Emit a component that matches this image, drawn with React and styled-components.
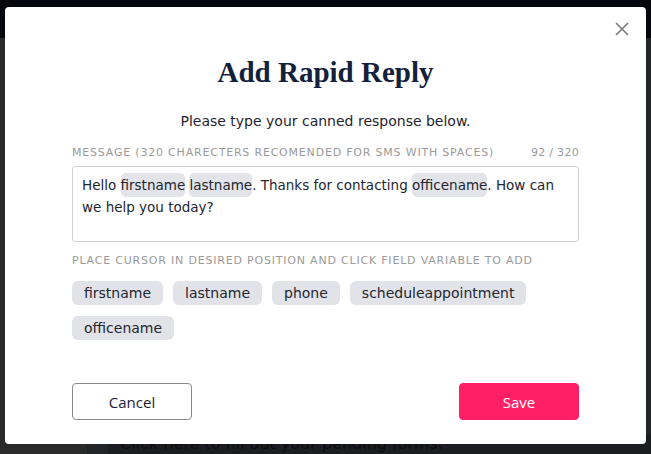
import React from 'react';
import styled, { createGlobalStyle } from 'styled-components';

const GlobalStyle = createGlobalStyle`
  html, body {
    margin: 0;
    padding: 0;
    height: 100%;
    background: #262626;
  }
  #root {
    height: 100%;
  }
`;

const Page = styled.div`
  display: flex;
  flex-direction: column;
  height: 454px;
  overflow: hidden;
  font-family: "DejaVu Sans", sans-serif;
`;

const TopBar = styled.div`
  height: 38px;
  background: #04070e;
`;

const Body = styled.div`
  flex: 1;
  display: grid;
  grid-template-columns: 87px 1fr;
  background: #272727;
`;

const Side = styled.div`
  background: #2a2a2a;
`;

const Main = styled.div`
  display: flex;
  flex-direction: column;
  justify-content: flex-end;
  background: #232427;
`;

const Banner = styled.div`
  margin-left: 21px;
  height: 20px;
  padding-left: 12px;
  background: #1c1d20;
  color: #0c0c0e;
  font-size: 16px;
  line-height: 20px;
  white-space: nowrap;
`;

const Overlay = styled.div`
  position: fixed;
  inset: 0;
  display: flex;
  justify-content: center;
  padding-top: 7px;
`;

const Modal = styled.div`
  position: relative;
  width: 641px;
  height: 437px;
  box-sizing: border-box;
  background: #ffffff;
  border-radius: 4px;
  padding: 46px 67px 0;
  display: flex;
  flex-direction: column;
  font-family: "DejaVu Sans", sans-serif;
  color: #222631;
`;

const Close = styled.button`
  position: absolute;
  top: 15px;
  right: 17px;
  width: 14px;
  height: 14px;
  padding: 0;
  border: none;
  background: none;
  cursor: pointer;
  display: flex;
`;

const Title = styled.h2`
  margin: 0;
  text-align: center;
  font-family: "Liberation Serif", "DejaVu Serif", serif;
  font-weight: 700;
  font-size: 29px;
  line-height: 38px;
  color: #14213d;
`;

const Subtitle = styled.p`
  margin: 21px 0 0;
  text-align: center;
  font-size: 14px;
  line-height: 19px;
  color: #1f2330;
`;

const LabelRow = styled.div`
  display: flex;
  justify-content: space-between;
  margin-top: ${(p) => p.$top || 14}px;
  font-size: 11px;
  line-height: 14px;
  color: #9a9a9a;
  text-transform: uppercase;
  letter-spacing: 0.8px;
  white-space: nowrap;
`;

const Count = styled.span`
  letter-spacing: 0.3px;
`;

const Field = styled.div`
  margin-top: 6px;
  height: 76px;
  box-sizing: border-box;
  border: 1px solid #cfd0d4;
  border-radius: 3px;
  padding: 7px 9px;
  font-size: 13.5px;
  line-height: 22px;
  color: #222631;
`;

const Token = styled.span`
  background: #e3e4e9;
  border-radius: 5px;
  padding: 4px 0;
`;

const Chips = styled.div`
  display: flex;
  flex-wrap: wrap;
  gap: 11px 10px;
  margin-top: 13px;
  width: 480px;
`;

const Chip = styled.button`
  height: 24px;
  padding: 0 12px;
  border: none;
  border-radius: 6px;
  background: #e2e3e8;
  font-family: "DejaVu Sans", sans-serif;
  font-size: 14px;
  color: #222631;
  cursor: pointer;
`;

const Actions = styled.div`
  display: flex;
  justify-content: space-between;
  margin-top: auto;
  margin-bottom: 24px;
`;

const Button = styled.button`
  width: 120px;
  height: 37px;
  box-sizing: border-box;
  border-radius: 4px;
  font-family: "Open Sans", sans-serif;
  font-size: 15px;
  cursor: pointer;
  border: 1px solid ${(p) => (p.$primary ? '#ff1f66' : '#8a8a8a')};
  background: ${(p) => (p.$primary ? '#ff1f66' : '#ffffff')};
  color: ${(p) => (p.$primary ? '#ffffff' : '#1b2235')};
`;

const variables = ['firstname', 'lastname', 'phone', 'scheduleappointment', 'officename'];

export default function App() {
  return (
    <>
      <GlobalStyle />
      <Page>
        <TopBar />
        <Body>
          <Side />
          <Main>
            <Banner>Click here to fill out your pending forms.</Banner>
          </Main>
        </Body>
      </Page>
      <Overlay>
        <Modal>
          <Close aria-label="Close">
            <svg width="14" height="14" viewBox="0 0 14 14">
              <path d="M1 1L13 13M13 1L1 13" stroke="#7a7a7a" strokeWidth="1.6" />
            </svg>
          </Close>
          <Title>Add Rapid Reply</Title>
          <Subtitle>Please type your canned response below.</Subtitle>
          <LabelRow $top={15}>
            <span>Message (320 charecters recomended for SMS with spaces)</span>
            <Count>92 / 320</Count>
          </LabelRow>
          <Field>
            Hello <Token>firstname</Token> <Token>lastname</Token>. Thanks for contacting{' '}
            <Token>officename</Token>. How can we help you today?
          </Field>
          <LabelRow $top={12}>
            <span>Place cursor in desired position and click field variable to add</span>
          </LabelRow>
          <Chips>
            {variables.map((v) => (
              <Chip key={v}>{v}</Chip>
            ))}
          </Chips>
          <Actions>
            <Button>Cancel</Button>
            <Button $primary>Save</Button>
          </Actions>
        </Modal>
      </Overlay>
    </>
  );
}
